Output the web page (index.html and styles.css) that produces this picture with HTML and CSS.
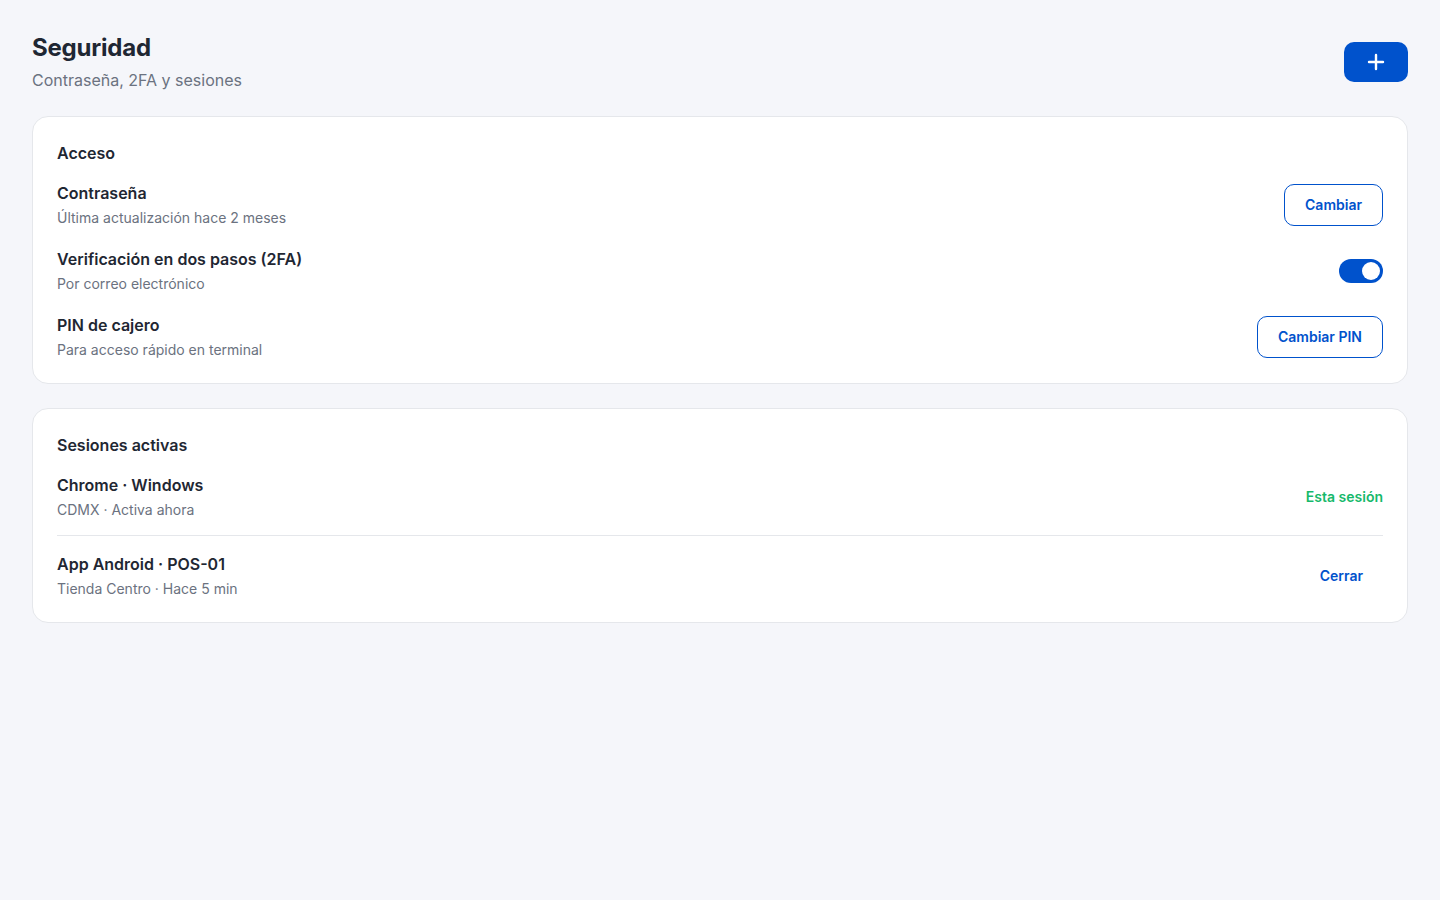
FILE: index.html
```html
<!DOCTYPE html>
<html lang="es">
<head>
<meta charset="utf-8">
<title>Seguridad</title>
<link rel="stylesheet" href="styles.css">
</head>
<body>
<main class="page">
  <header class="header">
    <div>
      <h1 class="title">Seguridad</h1>
      <p class="subtitle">Contraseña, 2FA y sesiones</p>
    </div>
    <button class="add-btn" aria-label="Agregar">
      <svg width="18" height="18" viewBox="0 0 18 18" fill="none"><path d="M9 2v14M2 9h14" stroke="#fff" stroke-width="2.4" stroke-linecap="round"/></svg>
    </button>
  </header>

  <section class="card">
    <h2 class="card-title">Acceso</h2>
    <div class="rows">
      <div class="row">
        <div class="info">
          <div class="row-title">Contraseña</div>
          <div class="row-sub">Última actualización hace 2 meses</div>
        </div>
        <button class="outline-btn">Cambiar</button>
      </div>
      <div class="row">
        <div class="info">
          <div class="row-title">Verificación en dos pasos (2FA)</div>
          <div class="row-sub">Por correo electrónico</div>
        </div>
        <span class="toggle"><span class="knob"></span></span>
      </div>
      <div class="row">
        <div class="info">
          <div class="row-title">PIN de cajero</div>
          <div class="row-sub">Para acceso rápido en terminal</div>
        </div>
        <button class="outline-btn">Cambiar PIN</button>
      </div>
    </div>
  </section>

  <section class="card">
    <h2 class="card-title">Sesiones activas</h2>
    <div class="sessions">
      <div class="session">
        <div class="info">
          <div class="row-title">Chrome · Windows</div>
          <div class="row-sub">CDMX · Activa ahora</div>
        </div>
        <span class="current">Esta sesión</span>
      </div>
      <div class="session">
        <div class="info">
          <div class="row-title">App Android · POS-01</div>
          <div class="row-sub">Tienda Centro · Hace 5 min</div>
        </div>
        <button class="text-btn">Cerrar</button>
      </div>
    </div>
  </section>
</main>
</body>
</html>
```

FILE: styles.css
```css
* { box-sizing: border-box; }
html, body { margin: 0; padding: 0; }
body {
  background: #f5f6fa;
  font-family: Inter, "Noto Sans", sans-serif;
  color: #1f2733;
}
.page {
  padding: 32px;
  display: flex;
  flex-direction: column;
  gap: 24px;
}
.header {
  display: flex;
  justify-content: space-between;
  align-items: center;
}
.title {
  margin: 0;
  font-size: 24px;
  line-height: 32px;
  font-weight: 700;
  color: #1f2733;
  letter-spacing: -0.2px;
}
.subtitle {
  margin: 4px 0 0;
  font-size: 16px;
  line-height: 24px;
  color: #6b7280;
}
.add-btn {
  width: 64px;
  height: 40px;
  border: none;
  border-radius: 10px;
  background: #0052cc;
  display: flex;
  align-items: center;
  justify-content: center;
  padding: 0;
  cursor: pointer;
}
.card {
  background: #fff;
  border: 1px solid #e5e7eb;
  border-radius: 16px;
  padding: 23px 24px;
}
.card-title {
  margin: 0 0 15px;
  font-size: 16px;
  line-height: 26px;
  font-weight: 600;
  color: #1f2733;
}
.rows {
  display: flex;
  flex-direction: column;
  gap: 19px;
}
.row, .session {
  display: flex;
  justify-content: space-between;
  align-items: center;
}
.row-title {
  font-size: 16px;
  line-height: 24px;
  font-weight: 600;
  color: #1f2733;
}
.row-sub {
  font-size: 14px;
  line-height: 20px;
  color: #6b7280;
  margin-top: 3px;
}
.outline-btn {
  height: 42px;
  padding: 0 20px;
  border: 1px solid #0052cc;
  border-radius: 10px;
  background: #fff;
  color: #0052cc;
  font-family: inherit;
  font-size: 14px;
  font-weight: 600;
  cursor: pointer;
}
.toggle {
  width: 44px;
  height: 24px;
  border-radius: 12px;
  background: #0052cc;
  display: flex;
  align-items: center;
  justify-content: flex-end;
  padding: 0 3px;
}
.knob {
  width: 18px;
  height: 18px;
  border-radius: 50%;
  background: #fff;
}
.session {
  padding: 15px 0 15px;
}
.session:first-child {
  padding-top: 0;
  border-bottom: 1px solid #e5e7eb;
}
.session:last-child {
  padding-top: 16px;
  padding-bottom: 0;
}
.current {
  font-size: 14px;
  font-weight: 600;
  color: #16b96b;
}
.text-btn {
  border: none;
  background: none;
  padding: 8px 20px;
  color: #0052cc;
  font-family: inherit;
  font-size: 14px;
  font-weight: 600;
  cursor: pointer;
}
```
